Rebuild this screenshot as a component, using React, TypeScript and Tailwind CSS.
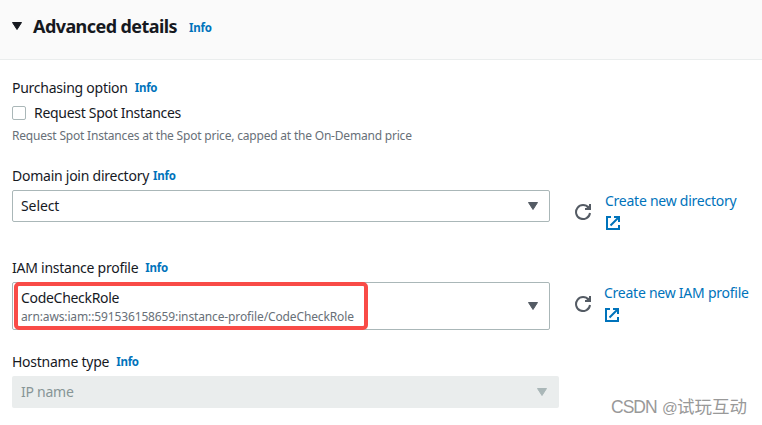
import React from "react";
import clsx from "clsx";

function Info({ className }: { className?: string }) {
    return <a className={clsx("text-[11.5px] font-bold tracking-[-0.25px] text-[#0073bb]", className)}>Info</a>;
}

function Label({ text, infoClassName }: { text: string; infoClassName?: string }) {
    return (
        <div className="flex h-[22px] items-center whitespace-nowrap">
            <span>{text}</span>
            <Info className={infoClassName} />
        </div>
    );
}

function Caret({ className }: { className?: string }) {
    return (
        <svg viewBox="0 0 12 10" className={clsx("h-[10px] w-3 shrink-0", className)}>
            <path d="M1.5 1.5h9L6 8.5z" fill="currentColor" stroke="currentColor" strokeLinejoin="round" />
        </svg>
    );
}

function RefreshIcon() {
    return (
        <svg viewBox="0 0 16 16" className="h-4 w-4 shrink-0 text-[#545b64]" fill="none" stroke="currentColor" strokeWidth="2">
            <path d="M15 9A7 7 0 1 1 13.6 3.8" />
            <path d="M15 0v5h-5" />
            <path d="M11.5 4 14 1.5V4z" fill="currentColor" stroke="none" />
        </svg>
    );
}

function ExternalIcon() {
    return (
        <svg viewBox="0 0 14 14" className="h-[14px] w-[14px]" fill="none" stroke="currentColor" strokeWidth="2">
            <path d="M5 1H1v12h12V9" />
            <path d="M8 1h5v5M12.5 1.5 4.5 9.5" />
        </svg>
    );
}

function CreateLink({ text, className }: { text: string; className?: string }) {
    return (
        <div className={clsx("flex flex-col text-[#0073bb]", className)}>
            <span className="h-[22px] leading-[22px] whitespace-nowrap">{text}</span>
            <span className="pt-1 pl-px">
                <ExternalIcon />
            </span>
        </div>
    );
}

export default function App() {
    return (
        <div className="relative h-[425px] w-[762px] overflow-hidden bg-white font-['Noto_Sans','Open_Sans',sans-serif] text-[14px] leading-[22px] tracking-[-0.25px] text-[#16191f]">
            <header className="flex h-[60px] items-center border-b border-[#eaeded] bg-[#fafafa] pb-[7px] pl-[11px]">
                <Caret />
                <h2 className="ml-[10px] text-[18px] font-bold tracking-[-0.57px]">Advanced details</h2>
                <Info className="ml-3 pt-[3px]" />
            </header>

            <main className="pl-3">
                <section className="pt-[17px]">
                    <Label text="Purchasing option" infoClassName="ml-[7px]" />
                    <div className="mt-[3px] flex h-[22px] items-center">
                        <span className="h-[14px] w-[14px] rounded-[2px] border border-[#aab7b8]" />
                        <span className="ml-2 tracking-[-0.3px]">Request Spot Instances</span>
                    </div>
                    <p className="mt-px text-[12px] tracking-[-0.2px] text-[#687078]">
                        Request Spot Instances at the Spot price, capped at the On-Demand price
                    </p>
                </section>

                <section className="pt-[18px]">
                    <Label text="Domain join directory" infoClassName="ml-1" />
                    <div className="mt-[3px] flex">
                        <div className="flex h-8 w-[538px] items-center justify-between rounded-[2px] border border-[#aab7b8] pr-[10px] pl-2">
                            <span className="tracking-[-0.1px]">Select</span>
                            <Caret className="text-[#545b64]" />
                        </div>
                        <div className="ml-[25px] pt-[14px]">
                            <RefreshIcon />
                        </div>
                        <CreateLink text="Create new directory" className="ml-[14px]" />
                    </div>
                </section>

                <section className="pt-[27px]">
                    <Label text="IAM instance profile" infoClassName="ml-[7px]" />
                    <div className="mt-[3px] flex">
                        <div className="relative flex h-12 w-[538px] items-center justify-between rounded-[2px] border border-[#aab7b8] pr-[10px] pl-2">
                            <div>
                                <div className="leading-[20px] tracking-[-0.3px]">CodeCheckRole</div>
                                <div className="text-[12px] leading-[17px] tracking-[-0.13px] text-[#687078]">
                                    arn:aws:iam::591536158659:instance-profile/CodeCheckRole
                                </div>
                            </div>
                            <Caret className="text-[#545b64]" />
                            <div className="absolute -top-px left-px h-12 w-[354px] rounded-[5px] border-4 border-[#f94b47]" />
                        </div>
                        <div className="ml-[25px] pt-[14px]">
                            <RefreshIcon />
                        </div>
                        <CreateLink text="Create new IAM profile" className="ml-[13px]" />
                    </div>
                </section>

                <section className="pt-[21px]">
                    <Label text="Hostname type" infoClassName="ml-[7px]" />
                    <div className="mt-[3px] flex h-8 w-[547px] items-center justify-between rounded-[2px] bg-[#eaeded] pr-[11px] pl-[9px] text-[#879596]">
                        <span>IP name</span>
                        <Caret className="text-[#aab7b8]" />
                    </div>
                </section>
            </main>

            <div className="absolute top-[395px] left-[611px] flex items-baseline font-['Liberation_Sans','Noto_Sans_CJK_SC',sans-serif] text-[17.5px] leading-6 tracking-normal whitespace-nowrap text-[#999]">
                <span className="w-[51px] text-[17.5px] tracking-[-1px]">CSDN</span>
                <span className="w-[15px] text-[15.5px] tracking-[-1px]">@</span>
                <span>试玩互动</span>
            </div>
        </div>
    );
}
